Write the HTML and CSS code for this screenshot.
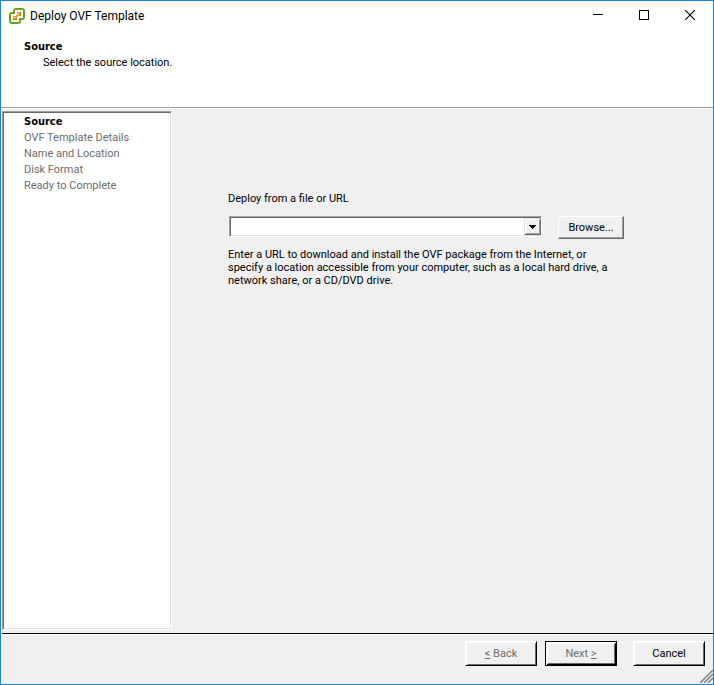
FILE: index.html
```html
<!DOCTYPE html>
<html lang="en">
<head>
  <meta charset="utf-8">
  <title>Deploy OVF Template</title>
  <link rel="stylesheet" href="styles.css">
</head>
<body>
  <div class="window">
    <div class="titlebar">
      <svg class="app-icon" width="16" height="16" viewBox="0 0 16 16">
        <rect x="5" y="1" width="10" height="10" rx="2" fill="#fff" stroke="#64a51f" stroke-width="2"/>
        <rect x="1" y="5" width="10" height="10" rx="2" fill="#fff" stroke="#64a51f" stroke-width="2"/>
        <path d="M6 2h8v8h-4v4H2V6h4z" fill="#fff"/>
        <path d="M8 4h4v4h-3v1H8v3H4V8h3V7h1z" fill="#eda030"/>
        <path d="M4 11h4v1H4zM11 4h1v4h-1z" fill="#b8691a"/>
        <path d="M5 9h2v1H5zM9 5h1v2H9z" fill="#f8cf80"/>
      </svg>
      <h1 class="title">Deploy OVF Template</h1>
      <button class="caption-btn" aria-label="Minimize">
        <svg width="10" height="10" viewBox="0 0 10 10"><path d="M0 4.500H10" stroke="#000"/></svg>
      </button>
      <button class="caption-btn" aria-label="Maximize">
        <svg width="10" height="10" viewBox="0 0 10 10"><rect x=".5" y=".5" width="9" height="9" fill="none" stroke="#000"/></svg>
      </button>
      <button class="caption-btn" aria-label="Close">
        <svg width="10" height="10" viewBox="0 0 10 10"><path d="M0 0L10 10M10 0L0 10" stroke="#000" stroke-width="1.100"/></svg>
      </button>
    </div>

    <div class="header">
      <h2>Source</h2>
      <p>Select the source location.</p>
    </div>

    <div class="main">
      <ol class="steps">
        <li class="current">Source</li>
        <li>OVF Template Details</li>
        <li>Name and Location</li>
        <li>Disk Format</li>
        <li>Ready to Complete</li>
      </ol>

      <div class="content">
        <label for="source">Deploy from a file or URL</label>
        <div class="source-row">
          <div class="combo">
            <input type="text" id="source">
            <button class="combo-arrow" aria-label="Show recent locations">
              <svg width="7" height="4" viewBox="0 0 7 4" shape-rendering="crispEdges"><path d="M0 0H7V1H6V2H5V3H4V4H3V3H2V2H1V1H0z"/></svg>
            </button>
          </div>
          <button class="browse">Browse...</button>
        </div>
        <p class="hint">Enter a URL to download and install the OVF package from the Internet, or specify a location accessible from your computer, such as a local hard drive, a network share, or a CD/DVD drive.</p>
      </div>
    </div>

    <div class="footer">
      <button class="nav-btn" disabled><u>&lt;</u> Back</button>
      <button class="nav-btn next" disabled>Next <u>&gt;</u></button>
      <button class="nav-btn cancel">Cancel</button>
      <svg class="grip" width="13" height="13" viewBox="0 0 13 13">
        <path d="M0 13L13 0M4 13L13 4M8 13L13 8" stroke="#808080" stroke-width="1.500"/>
      </svg>
    </div>
  </div>
</body>
</html>
```
FILE: styles.css
```css
* {
  box-sizing: border-box;
}
body {
  margin: 0;
  font: 11px/13px Tahoma, Roboto, sans-serif;
  color: #000;
}
h1, h2, p, ol {
  margin: 0;
  padding: 0;
}
button, input {
  font: inherit;
  color: inherit;
}
.window {
  display: flex;
  flex-direction: column;
  height: 100vh;
  background: #f0f0f0;
  border: 1px solid #1883d7;
}

/* title bar */
.titlebar {
  display: flex;
  align-items: center;
  height: 29px;
  padding-left: 8px;
  background: #fff;
}
.title {
  flex: 1;
  margin-left: 5px;
  font: 12px/16px "Segoe UI", Roboto, sans-serif;
}
.caption-btn {
  display: flex;
  align-items: center;
  justify-content: center;
  width: 46px;
  height: 29px;
  padding: 0 0 1px;
  border: 0;
  background: none;
}

/* header */
.header {
  height: 78px;
  padding: 10px 23px;
  background: #fff;
  border-bottom: 1px solid #a0a0a0;
}
.header h2 {
  font: bold 11px/13px Tahoma, "DejaVu Sans Condensed", sans-serif;
}
.header p {
  margin: 3px 0 0 19px;
}

/* steps and form */
.main {
  flex: 1;
  display: flex;
  padding: 2px 0 3px 1px;
  border-top: 1px solid #fff;
}
.steps {
  width: 170px;
  padding: 2px 21px;
  background: #fff;
  border: 1px solid;
  border-color: #a0a0a0 #fff #fff #a0a0a0;
  box-shadow: inset 1px 1px #696969, inset -1px -1px #e3e3e3;
  list-style: none;
  line-height: 16px;
  color: #6d6d6d;
}
.steps .current {
  font-family: Tahoma, "DejaVu Sans Condensed", sans-serif;
  font-weight: bold;
  color: #000;
}
.content {
  flex: 1;
  padding: 81px 89px 0 56px;
}
.content label {
  display: block;
}
.source-row {
  display: flex;
  align-items: flex-start;
  gap: 16px;
  margin-top: 11px;
}
.combo {
  flex: 1;
  display: flex;
  height: 21px;
  margin-left: 1px;
  padding: 1px 0 1px 1px;
  background: #fff;
  border: 1px solid;
  border-color: #a0a0a0 #fff #fff #a0a0a0;
  box-shadow: inset 1px 1px #696969, inset -1px -1px #e3e3e3;
}
.combo input {
  flex: 1;
  min-width: 0;
  padding: 0 2px;
  border: 0;
  outline: 0;
  background: none;
}
.combo-arrow {
  display: flex;
  align-items: center;
  justify-content: center;
  width: 17px;
  padding: 0;
  background: #f0f0f0;
  border: 1px solid;
  border-color: #e3e3e3 #696969 #696969 #e3e3e3;
  box-shadow: inset 1px 1px #fff, inset -1px -1px #a0a0a0;
}
.browse {
  width: 66px;
  height: 23px;
  padding: 0;
  background: #f0f0f0;
  border: 1px solid;
  border-color: #fff #696969 #696969 #fff;
  box-shadow: inset -1px -1px #a0a0a0;
}
.hint {
  max-width: 380px;
  margin-top: 9px;
}

/* footer buttons */
.footer {
  position: relative;
  display: flex;
  justify-content: flex-end;
  gap: 8px;
  height: 51px;
  margin-left: 1px;
  padding: 7px 8px 0;
  border-top: 1px solid #000;
  box-shadow: inset 0 1px #fff;
}
.nav-btn {
  width: 72px;
  height: 25px;
  padding: 0;
  background: #f0f0f0;
  border: 1px solid;
  border-color: #fff #000 #000 #fff;
  box-shadow: inset 1px 1px #fff, inset -1px -1px #696969;
}
.nav-btn:disabled {
  color: #6d6d6d;
}
.nav-btn.next {
  border-color: #000;
  box-shadow: inset 1px 1px #fff, inset -1px -1px #000, inset 2px 2px #fff, inset -2px -2px #696969;
}
.cancel {
  margin-left: 8px;
}
.grip {
  position: absolute;
  right: 0;
  bottom: 1px;
}
```
